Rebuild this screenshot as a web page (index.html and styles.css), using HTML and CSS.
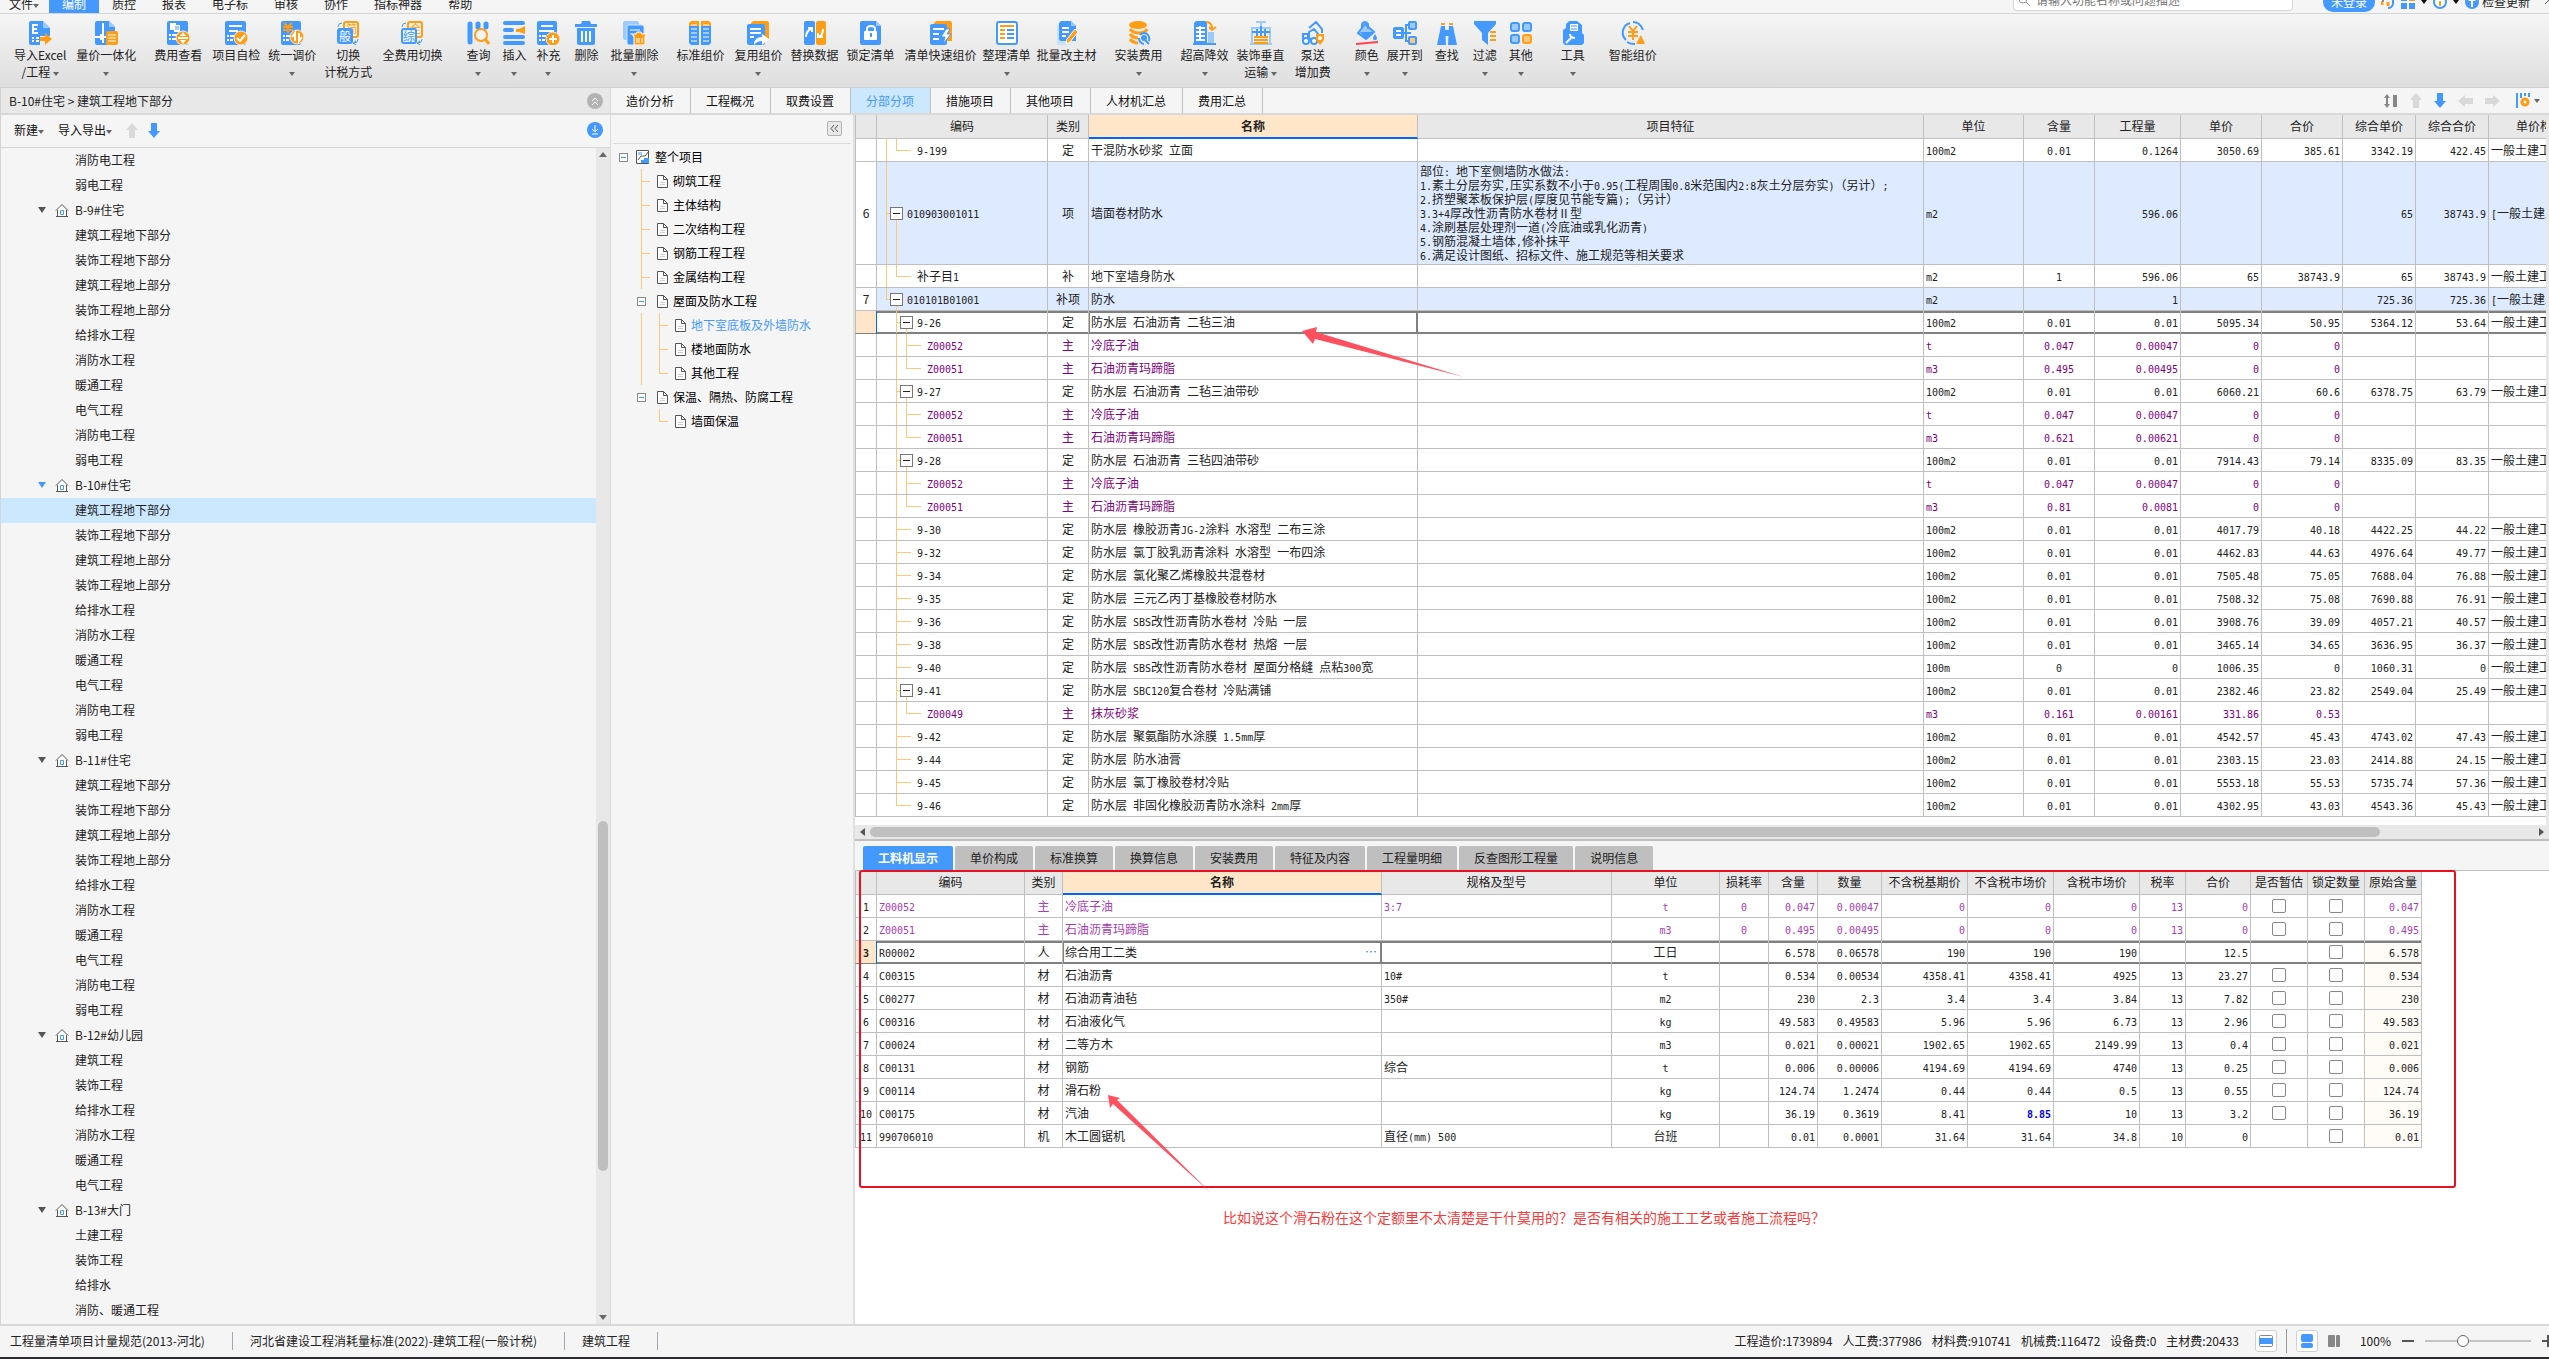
FILE: index.html
```html
<!DOCTYPE html>
<html lang="zh-CN">
<head>
    <meta charset="UTF-8">
    <meta name="viewport" content="width=device-width, initial-scale=1.0">
    <title>B-10#住宅 - 建筑工程地下部分</title>
    <link rel="stylesheet" href="styles.css">
</head>
<body>
    <svg class="sprite" aria-hidden="true">
        <symbol id="i-import" viewBox="0 0 24 24">
            <path fill="#4499ff" d="M3 0h12l7 7v8H12v9H3a2 2 0 0 1-2-2V2a2 2 0 0 1 2-2z"/>
            <path fill="#9ccbfb" d="M15 0l7 7h-7z"/>
            <path fill="none" stroke="#fff" stroke-width="2" d="M10 4H5v8h5M5 8h4M4 17h2M4 20h2M8 17h3M8 20h3"/>
            <path fill="#ff9d15" d="M12 16h5v-4l7 6-7 6v-4h-5z"/>
        </symbol>
        <symbol id="i-price" viewBox="0 0 24 24">
            <path fill="#4499ff" d="M3 0h12l6 6v5h-8v13H3a2 2 0 0 1-2-2V2a2 2 0 0 1 2-2z"/>
            <path fill="#9ccbfb" d="M15 0l6 6h-6z"/>
            <path stroke="#fff" stroke-width="2" d="M9 2v20M1 16h11M7 13v6"/>
            <rect x="12" y="10" width="12" height="14" rx="2" fill="#ff9d15"/>
            <path stroke="#fff" d="M14 14h8M14 17h8M14 20h8"/>
        </symbol>
        <symbol id="i-view" viewBox="0 0 24 24">
            <rect x="1" width="21" height="24" rx="2" fill="#4499ff"/>
            <path fill="#fff" d="M4 2h6v7H4zM8 4h6v7H8z"/>
            <path stroke="#4499ff" d="M9 6h4M9 8h4"/>
            <path stroke="#fff" stroke-width="2" d="M3 14h2M3 18h2M6 14h5M6 18h5"/>
            <circle cx="17" cy="17" r="7" fill="#ff9d15" stroke="#eee"/>
            <path stroke="#fff" stroke-width="2" d="M12 17h10"/>
            <path fill="#fff" d="M17 11l3 4h-6zM17 23l3-4h-6z"/>
        </symbol>
        <symbol id="i-check" viewBox="0 0 24 24">
            <rect x="1" width="21" height="24" rx="2" fill="#4499ff"/>
            <path stroke="#fff" stroke-width="2" d="M5 5h13M5 10h9M3 15h2M6 15h4M3 19h2M6 19h3"/>
            <circle cx="17" cy="17" r="7" fill="#ff9d15" stroke="#eee"/>
            <path fill="none" stroke="#fff" stroke-width="2" d="M13 17l3 3 5-6"/>
        </symbol>
        <symbol id="i-adjust" viewBox="0 0 24 24">
            <rect x="1" width="20" height="24" rx="2" fill="#4499ff"/>
            <path fill="none" stroke="#ff9d15" stroke-width="2" d="M4 2l4 4 4-4M8 6v6M3 6h10M3 9h10"/>
            <path stroke="#fff" stroke-width="2" d="M3 15h2M3 19h2M6 15h4M6 19h3"/>
            <circle cx="17" cy="16" r="7" fill="#ff9d15" stroke="#eee"/>
            <path fill="none" stroke="#fff" stroke-width="2" d="M15 20v-8l-3 4M19 12v8l3-4"/>
        </symbol>
        <symbol id="i-tax" viewBox="0 0 24 24">
            <rect x="8" y="1" width="14" height="15" rx="2" fill="#fff3df" stroke="#ff9d15" stroke-width="2"/>
            <text x="10" y="12" font-size="11" fill="#ff9d15">简</text>
            <rect x="2" y="8" width="14" height="14" rx="2" fill="#4499ff" stroke="#4499ff" stroke-width="2"/>
            <text x="3" y="20" font-size="12" fill="#fff">般</text>
            <path fill="none" stroke="#4499ff" d="M2 6q0-4 4-4M22 18q0 4-4 4M20 24l-3-2 3-2"/>
        </symbol>
        <symbol id="i-full" viewBox="0 0 24 24">
            <rect x="8" y="1" width="14" height="15" rx="2" fill="#fff3df" stroke="#ff9d15" stroke-width="2"/>
            <text x="10" y="12" font-size="11" fill="#ff9d15">全</text>
            <rect x="2" y="8" width="14" height="14" rx="2" fill="#e8f3ff" stroke="#4499ff" stroke-width="2"/>
            <text x="3" y="20" font-size="12" fill="#4499ff">综</text>
            <path fill="none" stroke="#4499ff" d="M2 6q0-4 4-4M22 18q0 4-4 4M20 24l-3-2 3-2"/>
        </symbol>
        <symbol id="i-query" viewBox="0 0 24 24">
            <path stroke="#4499ff" stroke-width="5" stroke-linecap="round" d="M4 3v18M12 3v3M20 3v3"/>
            <circle cx="15" cy="14" r="6" fill="#f4f4f4" stroke="#ff9d15" stroke-width="2"/>
            <path stroke="#ff9d15" stroke-width="3" d="M19 18l4 5"/>
        </symbol>
        <symbol id="i-insert" viewBox="0 0 24 24">
            <path stroke="#4499ff" stroke-width="4" stroke-linecap="round" d="M3 2h18M3 16h18M3 22h18"/>
            <path stroke="#4499ff" stroke-width="4" stroke-linecap="round" d="M3 9h7"/>
            <path fill="#ff9d15" d="M23 5v8l-6-2h-3V8h3z"/>
        </symbol>
        <symbol id="i-add" viewBox="0 0 24 24">
            <path fill="#4499ff" d="M3 0h16a2 2 0 0 1 2 2v22H3a2 2 0 0 1-2-2V2a2 2 0 0 1 2-2z"/>
            <path stroke="#fff" stroke-width="2" d="M5 5h12M3 10h15M3 15h2M6 15h4M3 19h2M6 19h3"/>
            <circle cx="17" cy="18" r="7" fill="#ff9d15" stroke="#eee"/>
            <path stroke="#fff" stroke-width="2" d="M13 18h8M17 14v8"/>
        </symbol>
        <symbol id="i-delete" viewBox="0 0 24 24">
            <path fill="#4499ff" d="M8 0h8l1 3h6v3H1V3h6zM3 7h18v15a2 2 0 0 1-2 2H5a2 2 0 0 1-2-2z"/>
            <path stroke="#fff" stroke-width="2" d="M8 10v11M12 10v11M16 10v11"/>
        </symbol>
        <symbol id="i-batch-delete" viewBox="0 0 24 24">
            <rect x="1" width="16" height="19" rx="2" fill="#9ccbfb"/>
            <rect x="5" y="4" width="17" height="20" rx="2" fill="#4499ff" stroke="#cfe5fb"/>
            <path stroke="#fff" d="M8 9h10M8 13h3"/>
            <path fill="#ff9d15" stroke="#fff" d="M11 13h3l1-2h4l1 2h4v2h-1v9H12v-9h-1z"/>
            <path stroke="#fff" d="M15 17v5M17 17v5M20 17v5"/>
        </symbol>
        <symbol id="i-standard" viewBox="0 0 24 24">
            <path fill="#4499ff" d="M1 5h10v19H3l-2-2zM13 5h10v17l-2 2h-8z"/>
            <path fill="#ff9d15" d="M3 0h8v5H1V2zM13 0h8l2 2v3H13z"/>
            <path stroke="#fff" d="M3 4h6M3 8h6M3 12h6M3 16h6M3 20h6M15 4h6M15 8h6M15 12h6M15 16h6M15 20h6"/>
        </symbol>
        <symbol id="i-reuse" viewBox="0 0 24 24">
            <path fill="#ff9d15" d="M7 0h14a2 2 0 0 1 2 2v16h-4V4H5V2z"/>
            <rect x="1" y="3" width="18" height="21" rx="2" fill="#4499ff"/>
            <path stroke="#fff" stroke-width="2" d="M4 8h11M4 12h11M4 16h4"/>
            <path fill="#fff" d="M8 24q0-8 8-8v-3l7 5-7 6v-4q-5 0-8 4z"/>
        </symbol>
        <symbol id="i-replace" viewBox="0 0 24 24">
            <rect x="1" width="11" height="24" rx="2" fill="#4499ff"/>
            <rect x="13" width="10" height="24" rx="2" fill="#ff9d15"/>
            <path fill="none" stroke="#fff" stroke-width="2" d="M3 16q0-6 5-8M5 7l4 0v4M20 8q0 6-4 8M20 16h-5v-4"/>
        </symbol>
        <symbol id="i-lock" viewBox="0 0 24 24">
            <path fill="#4499ff" d="M3 0h14l5 5v17a2 2 0 0 1-2 2H3a2 2 0 0 1-2-2V2a2 2 0 0 1 2-2z"/>
            <path fill="#9ccbfb" d="M17 0l5 5h-5z"/>
            <path fill="none" stroke="#fff" stroke-width="2" d="M8 10V8q0-3 4-3t4 3v2"/>
            <rect x="5" y="10" width="13" height="9" rx="1" fill="#fff"/>
            <path stroke="#4499ff" stroke-width="2" d="M12 12v4"/>
        </symbol>
        <symbol id="i-quick" viewBox="0 0 24 24">
            <path fill="#ff9d15" d="M7 0h14a2 2 0 0 1 2 2v18h-5V4H5V2z"/>
            <rect x="1" y="3" width="17" height="21" rx="2" fill="#4499ff"/>
            <path stroke="#fff" stroke-width="2" d="M4 8h11M4 13h6M4 18h6"/>
            <path fill="#fff" stroke="#4499ff" d="M17 8l-5 8h4l-2 7 8-10h-4l3-5z"/>
        </symbol>
        <symbol id="i-tidy" viewBox="0 0 24 24">
            <rect x="2" y="1" width="20" height="22" rx="2" fill="#fff" stroke="#4499ff" stroke-width="2"/>
            <path stroke="#ff9d15" stroke-width="2" d="M5 5h14M5 9h5M5 13h5M5 17h5"/>
            <path stroke="#4499ff" stroke-width="2" d="M12 9h7M12 13h7M12 17h7"/>
        </symbol>
        <symbol id="i-material" viewBox="0 0 24 24">
            <path fill="#c6e2fc" d="M2 4h12v20H4a2 2 0 0 1-2-2z"/>
            <path fill="#4499ff" d="M6 0h10l5 5v15H6a2 2 0 0 1-2-2V2z"/>
            <path fill="#9ccbfb" d="M16 0l5 5h-5z"/>
            <path stroke="#fff" stroke-width="2" d="M7 7h7M7 11h7M7 15h4"/>
            <path fill="#ff9d15" stroke="#fff" d="M20 8l3 3-8 10-4 2 1-5z"/>
        </symbol>
        <symbol id="i-install" viewBox="0 0 24 24">
            <ellipse cx="11" cy="4" rx="9" ry="4" fill="#ff9d15"/>
            <path fill="none" stroke="#ff9d15" stroke-width="3" d="M3 8q3 4 9 4t8-4M3 13q3 4 8 4M3 18q3 4 8 4"/>
            <path fill="none" stroke="#4499ff" stroke-width="2" d="M13 14a5 5 0 0 1 8 0q2 3 1 6M12 17q0 5 5 6M17 18l5 5"/>
            <circle cx="17" cy="17" r="3" fill="#4499ff"/>
        </symbol>
        <symbol id="i-height" viewBox="0 0 24 24">
            <path fill="#4499ff" d="M3 0h9a2 2 0 0 1 2 2v20h9v2H0v-2h1V2z"/>
            <path stroke="#fff" stroke-width="2" d="M3 7h9M3 11h9M3 15h9M3 19h9M7 5v15"/>
            <path fill="#9ccbfb" d="M15 11h6v11h-6z"/>
            <path fill="none" stroke="#ff9d15" stroke-width="2" d="M13 1q6 0 6 7M16 6l3 3 4-3"/>
        </symbol>
        <symbol id="i-vertical" viewBox="0 0 24 24">
            <path fill="none" stroke="#9ccbfb" stroke-width="2" d="M2 7h20M3 7v17M21 7v17M1 23h22M7 1h10M12 1v6"/>
            <path fill="none" stroke="#4499ff" stroke-width="2" d="M8 8v8M12 5v11M16 8v8M3 11h18"/>
            <path stroke="#ff9d15" stroke-width="2" d="M5 16h14M5 19h14M5 22h14"/>
        </symbol>
        <symbol id="i-pump" viewBox="0 0 24 24">
            <path fill="none" stroke="#4499ff" stroke-width="2" d="M8 7l7-6 6 7v4M2 19v-6h5v5M8 11l5-3 4 5-2 5H8z"/>
            <circle cx="5" cy="20" r="3" fill="#fff" stroke="#4499ff" stroke-width="2"/>
            <circle cx="13" cy="20" r="3" fill="#fff" stroke="#4499ff" stroke-width="2"/>
            <path fill="#ff9d15" d="M15 13h8v6l-4 5-4-5z"/>
            <circle cx="19" cy="17" r="2" fill="#fff"/>
        </symbol>
        <symbol id="i-color" viewBox="0 0 24 24">
            <path fill="#9ccbfb" stroke="#4499ff" stroke-width="2" d="M10 3l9 8-8 7-8-6z"/>
            <path fill="none" stroke="#4499ff" stroke-width="2" d="M7 7V3q3-4 6 0v5"/>
            <path fill="#4499ff" d="M5 11h14l-8 7zM20 13q4 6 0 6t0-6z"/>
            <path stroke="#ff4455" stroke-width="2" d="M1 23l22-2"/>
        </symbol>
        <symbol id="i-expand" viewBox="0 0 24 24">
            <path fill="none" stroke="#4499ff" stroke-width="2" d="M9 12h9M13 12V4h6M13 12v8h6"/>
            <rect y="6" width="11" height="12" rx="2" fill="#4499ff"/>
            <path stroke="#fff" stroke-width="2" d="M3 10h5M3 14h5"/>
            <rect x="16" y="1" width="7" height="7" rx="1" fill="#9ccbfb" stroke="#4499ff" stroke-width="2"/>
            <rect x="16" y="16" width="7" height="7" rx="1" fill="#ffc878" stroke="#4499ff" stroke-width="2"/>
        </symbol>
        <symbol id="i-find" viewBox="0 0 24 24">
            <path fill="#4499ff" d="M6 5h4l1 19H2zM14 5h4l4 19h-9zM10 9h4v6h-4z"/>
            <path stroke="#ff9d15" stroke-width="2" d="M6 3h4M14 3h4"/>
        </symbol>
        <symbol id="i-filter" viewBox="0 0 24 24">
            <path fill="#4499ff" d="M1 0h22v3l-8 9v12l-6-5v-7L1 3z"/>
            <path stroke="#ff9d15" stroke-width="2" d="M17 11h6M17 15h6M17 19h6"/>
        </symbol>
        <symbol id="i-other" viewBox="0 0 24 24">
            <g fill="#9ccbfb" stroke="#4499ff" stroke-width="2">
                <rect x="2" y="2" width="8" height="8" rx="2"/>
                <rect x="14" y="2" width="8" height="8" rx="2"/>
                <rect x="2" y="14" width="8" height="8" rx="2"/>
            </g>
            <rect x="14" y="14" width="8" height="8" rx="2" fill="#ffc878" stroke="#ff9d15" stroke-width="2"/>
        </symbol>
        <symbol id="i-tool" viewBox="0 0 24 24">
            <path fill="#4499ff" d="M8 0h8l5 4v8l2 2v8l-2 2H4l-2-2V9l3-2V3z"/>
            <path fill="#fff" d="M9 3h8v7H9z"/>
            <path stroke="#9ccbfb" stroke-width="2" d="M10 5h6M10 8h6"/>
            <path fill="none" stroke="#fff" stroke-width="2" d="M5 22l5-5M9 13q0 4 5 4"/>
        </symbol>
        <symbol id="i-smart" viewBox="0 0 24 24">
            <path fill="none" stroke="#4499ff" stroke-width="2" d="M9 2a10 10 0 0 0-4 17M12 1q7 0 10 8M6 21q3 2 8 2"/>
            <path fill="none" stroke="#ff9d15" stroke-width="2" d="M8 5l4 5 4-5M12 10v9M7 11h10M7 15h10"/>
            <path fill="#ff9d15" d="M20 14l4 9h-9z"/>
        </symbol>
        <symbol id="i-home" viewBox="0 0 14 14">
            <path fill="#fff" stroke="#555" d="M1 7.500l6-6 6 6M2.500 7v6.500h9V7M1 13.500h12"/>
            <path fill="none" stroke="#4499ff" d="M5.500 7.500h3v4h-3z"/>
        </symbol>
        <symbol id="i-page" viewBox="0 0 11 13">
            <path fill="#fff" stroke="#555" d="M.5.5h6l4 4v8H.5zM6.500.5v4h4"/>
            <path stroke="#ccc" d="M3 7.500h5M3 9.500h5"/>
        </symbol>
        <symbol id="i-project" viewBox="0 0 14 14">
            <path fill="#fff" stroke="#555" d="M.5.5h12v13H.5z"/>
            <path fill="#9ccbfb" d="M2 2h4v3H2z"/>
            <path fill="none" stroke="#555" d="M13 1L9 6H5L2 10"/>
            <path fill="#4499ff" d="M5 10h3V8h5v5H5z"/>
        </symbol>
        <symbol id="i-up" viewBox="0 0 12 15"><path d="M6 0l6 7H9v8H3V7H0z"/></symbol>
        <symbol id="i-down" viewBox="0 0 12 15"><path d="M6 15l6-7H9V0H3v8H0z"/></symbol>
        <symbol id="i-left" viewBox="0 0 15 12"><path d="M0 6l7-6v3h8v6H7v3z"/></symbol>
        <symbol id="i-right" viewBox="0 0 15 12"><path d="M15 6L8 0v3H0v6h8v3z"/></symbol>
    </svg>

    <header class="menubar">
        <nav class="menus">
            <a class="menu file" href="#">文件<i class="caret"></i></a>
            <a class="menu active" href="#">编制</a>
            <a class="menu" href="#">质控</a>
            <a class="menu" href="#">报表</a>
            <a class="menu" href="#">电子标</a>
            <a class="menu" href="#">审核</a>
            <a class="menu" href="#">协作</a>
            <a class="menu" href="#">指标神器</a>
            <a class="menu" href="#">帮助</a>
        </nav>
        <div class="search">
            <svg width="12" height="12" viewBox="0 0 12 12"><circle cx="5" cy="5" r="4" fill="none" stroke="#999"/><path stroke="#999" d="M8 8l4 4"/></svg>
            <input type="text" placeholder="请输入功能名称或问题描述" aria-label="搜索功能">
        </div>
        <div class="account">
            <button class="login">未登录</button>
            <svg width="14" height="14" viewBox="0 0 14 14"><path fill="none" stroke="#4499ff" stroke-width="2" d="M2 7V5q1-4 5-4t5 4v4q-1 4-5 4"/><path stroke="#ff9d15" stroke-width="3" d="M1 6v4M7 7v4"/></svg>
            <svg width="14" height="14" viewBox="0 0 14 14"><path fill="#4499ff" d="M0 0h6v6H0zM0 8h6v6H0zM8 8h6v6H8z"/><path fill="#ff9d15" d="M8 0h6v6H8z"/></svg>
            <i class="caret dark"></i>
            <svg width="14" height="14" viewBox="0 0 14 14"><circle cx="7" cy="7" r="6" fill="#fff" stroke="#4499ff" stroke-width="2"/><path stroke="#ff9d15" stroke-width="2" d="M7 3v2M7 6v5"/></svg>
            <i class="caret dark"></i>
            <a class="update" href="#"><svg width="15" height="15" viewBox="0 0 15 15"><circle cx="7" cy="7" r="7" fill="#4499ff"/><path fill="#fff" d="M7 2l4 4H8v6H6V6H3z"/></svg>检查更新</a>
            <svg width="12" height="12" viewBox="0 0 12 12"><path fill="none" stroke="#555" d="M1 8l5-5 5 5"/></svg>
        </div>
    </header>

    <div class="ribbon">
        <button class="tool"><svg><use href="#i-import"/></svg><span>导入Excel</span><span>/工程 <i class="caret"></i></span></button>
        <button class="tool gap-10"><svg><use href="#i-price"/></svg><span>量价一体化</span><span><i class="caret"></i></span></button>
        <button class="tool gap-18"><svg><use href="#i-view"/></svg><span>费用查看</span></button>
        <button class="tool gap-10"><svg><use href="#i-check"/></svg><span>项目自检</span></button>
        <button class="tool gap-8"><svg><use href="#i-adjust"/></svg><span>统一调价</span><span><i class="caret"></i></span></button>
        <button class="tool gap-8"><svg><use href="#i-tax"/></svg><span>切换</span><span>计税方式</span></button>
        <button class="tool gap-10"><svg><use href="#i-full"/></svg><span>全费用切换</span></button>
        <button class="tool gap-24"><svg><use href="#i-query"/></svg><span>查询</span><span><i class="caret"></i></span></button>
        <button class="tool gap-12"><svg><use href="#i-insert"/></svg><span>插入</span><span><i class="caret"></i></span></button>
        <button class="tool gap-10"><svg><use href="#i-add"/></svg><span>补充</span><span><i class="caret"></i></span></button>
        <button class="tool gap-14"><svg><use href="#i-delete"/></svg><span>删除</span></button>
        <button class="tool gap-12"><svg><use href="#i-batch-delete"/></svg><span>批量删除</span><span><i class="caret"></i></span></button>
        <button class="tool gap-18"><svg><use href="#i-standard"/></svg><span>标准组价</span></button>
        <button class="tool gap-10"><svg><use href="#i-reuse"/></svg><span>复用组价</span><span><i class="caret"></i></span></button>
        <button class="tool gap-8"><svg><use href="#i-replace"/></svg><span>替换数据</span></button>
        <button class="tool gap-8"><svg><use href="#i-lock"/></svg><span>锁定清单</span></button>
        <button class="tool gap-10"><svg><use href="#i-quick"/></svg><span>清单快速组价</span></button>
        <button class="tool gap-6"><svg><use href="#i-tidy"/></svg><span>整理清单</span><span><i class="caret"></i></span></button>
        <button class="tool gap-6"><svg><use href="#i-material"/></svg><span>批量改主材</span></button>
        <button class="tool gap-18"><svg><use href="#i-install"/></svg><span>安装费用</span><span><i class="caret"></i></span></button>
        <button class="tool gap-18"><svg><use href="#i-height"/></svg><span>超高降效</span><span><i class="caret"></i></span></button>
        <button class="tool gap-8"><svg><use href="#i-vertical"/></svg><span>装饰垂直</span><span>运输 <i class="caret"></i></span></button>
        <button class="tool gap-10"><svg><use href="#i-pump"/></svg><span>泵送</span><span>增加费</span></button>
        <button class="tool gap-24"><svg><use href="#i-color"/></svg><span>颜色</span><span><i class="caret"></i></span></button>
        <button class="tool gap-8"><svg><use href="#i-expand"/></svg><span>展开到</span><span><i class="caret"></i></span></button>
        <button class="tool gap-12"><svg><use href="#i-find"/></svg><span>查找</span></button>
        <button class="tool gap-14"><svg><use href="#i-filter"/></svg><span>过滤</span><span><i class="caret"></i></span></button>
        <button class="tool gap-12"><svg><use href="#i-other"/></svg><span>其他</span><span><i class="caret"></i></span></button>
        <button class="tool gap-28"><svg><use href="#i-tool"/></svg><span>工具</span><span><i class="caret"></i></span></button>
        <button class="tool gap-24"><svg><use href="#i-smart"/></svg><span>智能组价</span></button>
    </div>

    <div class="workspace">
        <aside class="side">
            <div class="side-head">
                <span>B-10#住宅 &gt; 建筑工程地下部分</span>
                <svg width="16" height="16" viewBox="0 0 16 16"><circle cx="8" cy="8" r="8" fill="#b3b3b3"/><path fill="none" stroke="#fff" d="M5 8l3-3 3 3M5 12l3-3 3 3"/></svg>
            </div>
            <div class="side-tools">
                <button class="plain">新建<i class="caret"></i></button>
                <button class="plain">导入导出<i class="caret"></i></button>
                <svg class="arrow off" width="12" height="15"><use href="#i-up"/></svg>
                <svg class="arrow" width="12" height="15"><use href="#i-down"/></svg>
                <svg class="circle" width="16" height="16" viewBox="0 0 16 16"><circle cx="8" cy="8" r="8" fill="#4499ff"/><path fill="none" stroke="#fff" d="M8 3v7M5 7l3 3 3-3M5 12h6"/></svg>
            </div>
            <div class="side-body">
                <ul class="tree" id="project-tree"></ul>
                <div class="vbar">
                    <i class="tri up"></i>
                    <i class="vthumb"></i>
                    <i class="tri down"></i>
                </div>
            </div>
        </aside>

        <div class="content">
            <nav class="tabs">
                <a href="#">造价分析</a>
                <a href="#">工程概况</a>
                <a href="#">取费设置</a>
                <a class="active" href="#">分部分项</a>
                <a href="#">措施项目</a>
                <a href="#">其他项目</a>
                <a href="#">人材机汇总</a>
                <a href="#">费用汇总</a>
                <div class="tab-tools">
                    <svg width="14" height="14" viewBox="0 0 14 14"><path fill="#888" d="M3 0l3 4H0zM3 14l3-4H0zM2 4h2v6H2zM9 1h4v12H9z"/></svg>
                    <svg class="arrow off" width="12" height="15"><use href="#i-up"/></svg>
                    <svg class="arrow" width="12" height="15"><use href="#i-down"/></svg>
                    <svg class="arrow off" width="15" height="12"><use href="#i-left"/></svg>
                    <svg class="arrow off" width="15" height="12"><use href="#i-right"/></svg>
                    <span class="setup"><svg width="14" height="15" viewBox="0 0 14 15"><path stroke="#4499ff" stroke-width="2" d="M1 0v15M5 0v5M9 0v3M13 0v4"/><circle cx="9" cy="9" r="3" fill="none" stroke="#ff9d15" stroke-width="3"/></svg><i class="caret"></i></span>
                </div>
            </nav>
            <div class="panes">
                <aside class="outline">
                    <div class="outline-head"><button class="fold" aria-label="收起"><svg width="13" height="13" viewBox="0 0 13 13"><path fill="none" stroke="#555" d="M6 3L3 6.500 6 10M10 3L7 6.500 10 10"/></svg></button></div>
                    <ul class="outline-tree" id="outline-tree"></ul>
                </aside>

                <main class="main">
                    <div class="grid-wrap">
                        <table class="grid bill">
                            <colgroup>
                                <col class="w22"><col class="w171"><col class="w41"><col class="w329"><col>
                                <col class="w100"><col class="w71"><col class="w86"><col class="w81"><col class="w81">
                                <col class="w73"><col class="w73"><col class="w127">
                            </colgroup>
                            <thead>
                                <tr><th></th><th>编码</th><th>类别</th><th class="sorted">名称</th><th>项目特征</th><th>单位</th><th>含量</th><th>工程量</th><th>单价</th><th>合价</th><th>综合单价</th><th>综合合价</th><th>单价构成文件</th></tr>
                            </thead>
                            <tbody id="bill-rows"></tbody>
                        </table>
                    </div>
                    <div class="hbar">
                        <i class="tri left"></i>
                        <i class="hthumb"></i>
                        <i class="tri right"></i>
                    </div>

                    <nav class="subtabs">
                        <a class="active" href="#">工料机显示</a>
                        <a href="#">单价构成</a>
                        <a href="#">标准换算</a>
                        <a href="#">换算信息</a>
                        <a href="#">安装费用</a>
                        <a href="#">特征及内容</a>
                        <a href="#">工程量明细</a>
                        <a href="#">反查图形工程量</a>
                        <a href="#">说明信息</a>
                    </nav>
                    <section class="detail">
                        <table class="grid parts">
                            <colgroup>
                                <col class="w22"><col class="w148"><col class="w38"><col class="w319"><col class="w230"><col class="w108">
                                <col class="w49"><col class="w49"><col class="w64"><col class="w86"><col class="w86"><col class="w86">
                                <col class="w46"><col class="w65"><col class="w57"><col class="w57"><col class="w57">
                            </colgroup>
                            <thead>
                                <tr><th></th><th>编码</th><th>类别</th><th class="sorted">名称</th><th>规格及型号</th><th>单位</th><th>损耗率</th><th>含量</th><th>数量</th><th>不含税基期价</th><th>不含税市场价</th><th>含税市场价</th><th>税率</th><th>合价</th><th>是否暂估</th><th>锁定数量</th><th>原始含量</th></tr>
                            </thead>
                            <tbody id="part-rows"></tbody>
                        </table>
                        <div class="mark-box"></div>
                        <svg class="mark-arrow second" width="105" height="99" viewBox="0 0 105 99"><path fill="#ff5060" d="M0 0l12 3-3 2 94 93L5 9l-3 4z"/></svg>
                        <p class="note">比如说这个滑石粉在这个定额里不太清楚是干什莫用的？是否有相关的施工工艺或者施工流程吗？</p>
                    </section>
                    <svg class="mark-arrow first" width="162" height="50" viewBox="0 0 162 50"><path fill="#ff5060" d="M0 4l15-4-1 5 148 45L13 12l-2 5z"/></svg>
                </main>
            </div>
        </div>
    </div>

    <footer class="status">
        <span class="seg">工程量清单项目计量规范(2013-河北)</span>
        <span class="seg">河北省建设工程消耗量标准(2022)-建筑工程(一般计税)</span>
        <span class="seg">建筑工程</span>
        <div class="totals">
            <span>工程造价:1739894</span>
            <span>人工费:377986</span>
            <span>材料费:910741</span>
            <span>机械费:116472</span>
            <span>设备费:0</span>
            <span>主材费:20433</span>
        </div>
        <div class="view">
            <button class="mode" aria-label="列表"><svg width="14" height="14" viewBox="0 0 14 14"><rect x=".5" y="1.500" width="13" height="11" rx="1" fill="#fff" stroke="#888"/><path fill="#4499ff" d="M0 4h14v6H0z"/></svg></button>
            <i class="bar"></i>
            <button class="mode" aria-label="上下"><svg width="14" height="14" viewBox="0 0 14 14"><rect x="1" y="0" width="12" height="8" rx="2" fill="#4499ff"/><rect x="1" y="9" width="12" height="5" rx="2" fill="#4499ff"/></svg></button>
            <button class="mode flat" aria-label="左右"><svg width="14" height="14" viewBox="0 0 14 14"><rect x="1" y="1" width="7" height="12" rx="1" fill="#888"/><rect x="9" y="1" width="4" height="12" rx="1" fill="#888"/></svg></button>
        </div>
        <div class="zoom">
            <span>100%</span>
            <button class="step" aria-label="缩小"><svg width="12" height="12" viewBox="0 0 12 12"><path stroke="#555" stroke-width="2" d="M0 6h12"/></svg></button>
            <input type="range" min="0" max="100" value="34" aria-label="缩放">
            <button class="step" aria-label="放大"><svg width="12" height="12" viewBox="0 0 12 12"><path stroke="#555" stroke-width="2" d="M0 6h12M6 0v12"/></svg></button>
        </div>
    </footer>

    <script src="script.js"></script>
</body>
</html>
```
FILE: styles.css
```css
* {
    box-sizing: border-box;
}
body {
    margin: 0;
    height: 100vh;
    display: flex;
    flex-direction: column;
    overflow: hidden;
    background-color: #f5f5f5;
    color: #222;
    font-family: "Noto Sans CJK SC", sans-serif;
    font-size: 12px;
    line-height: 18px;
}
a {
    color: inherit;
    text-decoration: none;
}
button {
    padding: 0;
    border: none;
    background: none;
    color: inherit;
    font: inherit;
    cursor: pointer;
}
ul {
    margin: 0;
    padding: 0;
    list-style: none;
}
svg {
    display: block;
    flex: none;
}
.sprite {
    display: none;
}
.caret {
    display: inline-block;
    border: 3px solid transparent;
    border-top: 4px solid #666;
    border-bottom: none;
    vertical-align: middle;
}
.caret.dark {
    border-top-color: #111;
}

/* menu */
.menubar {
    flex: none;
    display: flex;
    align-items: flex-end;
    height: 14px;
    border-bottom: 1px solid #d4d4d4;
    overflow: hidden;
}
.menus {
    display: flex;
    flex: 1;
}
.menu {
    padding: 0 13px;
}
.menu.file {
    padding: 0 10px 0 9px;
}
.menu.active {
    background-color: #4499ff;
    color: #fff;
}
.search {
    display: flex;
    align-items: center;
    gap: 6px;
    width: 280px;
    height: 22px;
    margin-bottom: 2px;
    padding: 0 0 0 4px;
    border: 1px solid #d4d4d4;
    border-radius: 3px;
    background-color: #fff;
}
.search input {
    flex: 1;
    min-width: 0;
    padding: 0;
    border: none;
    outline: none;
    background: none;
    font: inherit;
}
.search input::placeholder {
    color: #777;
}
.account {
    display: flex;
    align-items: center;
    gap: 6px;
    height: 20px;
    margin: 0 -7px 1px 30px;
}
.login {
    width: 52px;
    height: 20px;
    border-radius: 10px;
    background-color: #4499ff;
    color: #fff;
}
.update {
    display: flex;
    align-items: center;
    gap: 2px;
    margin-right: 8px;
}

/* ribbon */
.ribbon {
    flex: none;
    display: flex;
    align-items: flex-start;
    height: 74px;
    padding: 7px 14px 0;
    border-bottom: 1px solid #d0d0d0;
    background: linear-gradient(#f5f5f5, #dedede);
}
.tool {
    display: flex;
    flex-direction: column;
    align-items: center;
    line-height: 17px;
    white-space: nowrap;
}
.tool svg {
    width: 24px;
    height: 24px;
    margin-bottom: 1px;
}
.gap-6 { margin-left: 6px; }
.gap-8 { margin-left: 8px; }
.gap-10 { margin-left: 10px; }
.gap-12 { margin-left: 12px; }
.gap-14 { margin-left: 14px; }
.gap-18 { margin-left: 18px; }
.gap-24 { margin-left: 24px; }
.gap-28 { margin-left: 28px; }

.workspace {
    flex: 1;
    min-height: 0;
    display: flex;
}

/* project tree */
.side {
    flex: none;
    width: 611px;
    display: flex;
    flex-direction: column;
    border-left: 1px solid #d4d4d4;
    border-right: 1px solid #d9d9d9;
}
.side-head {
    display: flex;
    align-items: center;
    justify-content: space-between;
    height: 27px;
    padding: 0 7px 0 8px;
    border-bottom: 2px solid #d9d9d9;
    background-color: #e8e8e8;
}
.side-tools {
    display: flex;
    align-items: center;
    gap: 10px;
    height: 33px;
    padding: 0 7px 2px 13px;
    border-bottom: 1px solid #d4d4d4;
}
.plain {
    margin-right: 4px;
    color: #111;
}
.arrow {
    fill: #4499ff;
}
.arrow.off {
    fill: #d9d9d9;
}
.circle {
    margin-left: auto;
}
.side-body {
    flex: 1;
    min-height: 0;
    display: flex;
}
.tree {
    flex: 1;
    overflow: hidden;
}
.tree li {
    display: flex;
    align-items: center;
    height: 25px;
    padding: 0 0 2px 74px;
}
.tree .building {
    gap: 9px;
    padding-left: 37px;
}
.tree .building svg {
    width: 14px;
    height: 14px;
    margin-right: -3px;
}
.tree .building .caret {
    border-width: 4px 4px 0;
    border-top: 6px solid #555;
}
.tree .open .caret {
    border-top-color: #4499ff;
}
.tree .selected {
    background-color: #cce8ff;
}
.vbar {
    display: flex;
    flex-direction: column;
    align-items: center;
    width: 14px;
    padding: 4px 0;
    background-color: #e8e8e8;
}
.vthumb {
    width: 10px;
    height: 30%;
    margin-top: auto;
    margin-bottom: 144px;
    border-radius: 5px;
    background-color: #bfbfbf;
}
.tri {
    flex: none;
    border: 4px solid transparent;
}
.tri.up {
    border-bottom: 5px solid #666;
    border-top: none;
}
.tri.down {
    border-top: 5px solid #666;
    border-bottom: none;
}
.tri.left {
    border-right: 5px solid #555;
    border-left: none;
}
.tri.right {
    border-left: 5px solid #555;
    border-right: none;
}

/* tabs */
.content {
    flex: 1;
    min-width: 0;
    display: flex;
    flex-direction: column;
}
.tabs {
    flex: none;
    display: flex;
    height: 27px;
    border-bottom: 2px solid #d9d9d9;
}
.tabs a {
    padding: 0 16px 0 15px;
    border-right: 1px solid #bfbfbf;
    color: #111;
    line-height: 26px;
}
.tabs a.active {
    background-color: #cce8ff;
    color: #4499ff;
}
.tab-tools {
    display: flex;
    align-items: center;
    gap: 12px;
    margin-left: auto;
    padding-right: 9px;
}
.setup {
    display: flex;
    align-items: center;
    gap: 4px;
    margin-left: 4px;
}

.panes {
    flex: 1;
    min-height: 0;
    display: flex;
}
.outline {
    flex: none;
    width: 244px;
    border-right: 2px solid #e0e0e0;
}
.outline-head {
    display: flex;
    justify-content: flex-end;
    align-items: center;
    height: 29px;
    margin: 0 2px;
    padding: 0 9px 2px 0;
    border-bottom: 1px solid #dcdcdc;
}
.fold {
    border: 1px solid #b3b3b3;
    border-radius: 2px;
    background-color: #e8e8e8;
}
.outline-tree {
    padding: 1px 0 0 3px;
    color: #000;
}
.outline-tree li {
    display: flex;
    align-items: center;
    height: 24px;
}
.outline-tree svg {
    width: 11px;
    height: 13px;
    margin: 0 5px 0 7px;
}
.outline-tree .root svg {
    width: 14px;
    height: 14px;
    margin: 0 5px 0 4px;
}
.outline-tree .selected {
    color: #4499ff;
}
.outline-tree .g {
    width: 18px;
    height: 24px;
}
.outline-tree .box {
    width: 9px;
    height: 9px;
    border-color: #888;
}
.outline-tree .box::after {
    left: 1px;
    right: 1px;
    top: 3px;
    background-color: #2ba6d8;
}
.outline-tree .g.x::before {
    display: none;
}

/* guide lines shared by both trees */
.g {
    position: relative;
    flex: none;
    width: 10px;
    height: 100%;
    display: flex;
    align-items: center;
    justify-content: center;
}
.g::before,
.g::after {
    position: absolute;
    background-color: #ffc878;
}
.g.v::before,
.g.t::before,
.g.l::before,
.g.x::before {
    content: "";
    left: 50%;
    top: 0;
    bottom: 0;
    width: 1px;
}
.g.l::before {
    bottom: 50%;
}
.g.x::before {
    top: 50%;
}
.g.t::after,
.g.l::after,
.g.h::after {
    content: "";
    left: 50%;
    right: 0;
    top: 50%;
    height: 1px;
}
.g.h::after {
    left: 0;
}
.box {
    position: relative;
    flex: none;
    width: 13px;
    height: 13px;
    border: 1px solid #777;
    background-color: #fff;
}
.box::after {
    content: "";
    position: absolute;
    left: 2px;
    right: 2px;
    top: 5px;
    height: 1px;
    background-color: #222;
}

/* data grids */
.main {
    position: relative;
    flex: 1;
    min-width: 0;
    display: flex;
    flex-direction: column;
    background-color: #fff;
}
.grid-wrap {
    overflow: hidden;
    padding-bottom: 8px;
    border-right: 3px solid #e8e8e8;
}
.grid {
    table-layout: fixed;
    border-collapse: separate;
    border-spacing: 0;
}
/* the last column runs past the visible edge */
.bill {
    width: calc(100% + 70px);
}
.parts {
    width: 1567px;
}
.grid th,
.grid td {
    height: 23px;
    padding: 0 2px 1px;
    border-right: 1px solid #bfbfbf;
    border-bottom: 1px solid #bfbfbf;
    overflow: hidden;
    line-height: 18px;
    white-space: nowrap;
    text-align: right;
}
.grid th {
    height: 24px;
    background-color: #e8e8e8;
    font-weight: normal;
    text-align: center;
}
.grid th.sorted {
    background-color: #ffe6c8;
    border-bottom: 2px solid #0066ff;
    font-weight: bold;
}
.grid th:first-child,
.grid td:first-child {
    padding: 0;
    border-left: 1px solid #bfbfbf;
    text-align: center;
}
.grid .en {
    font-family: "DejaVu Sans Mono", monospace;
    font-size: 10px;
    line-height: 0;
}
.grid td.txt {
    text-align: left;
}
.grid td.mid {
    text-align: center;
}
.grid td.feature {
    text-align: left;
    line-height: 14px;
    white-space: pre;
}
.grid td.code-cell {
    padding: 0 0 0 4px;
}
.code {
    display: flex;
    align-items: center;
    height: 22px;
}
.code .label {
    margin-left: 6px;
}
.item td {
    background-color: #ddeaff;
}
.item td:first-child {
    background-color: #fff;
}
.tall .code {
    height: 102px;
}
.main-part {
    color: #800080;
}
.parts .main-part {
    color: #a83cb4;
}
.grid .main-part td:first-child {
    color: #222;
}
.grid .current td {
    border-bottom-color: #808080;
    box-shadow: inset 0 2px #808080, inset 0 -1px #808080;
}
.grid .current td:first-child {
    background-color: #ffe6c8;
    border-right-color: #0066ff;
    box-shadow: none;
    font-weight: bold;
}
.grid .current td:nth-child(4) {
    border-right-color: #808080;
    box-shadow: inset 0 2px #808080, inset 0 -1px #808080, inset 1px 0 #808080, inset -1px 0 #808080;
}
.named {
    display: flex;
    justify-content: space-between;
    padding-right: 2px;
}
.more {
    color: #2b7fc8;
}
.parts td.tint {
    background-color: #fffbf6;
}
.changed {
    color: #0000e0;
    font-weight: bold;
}
.grid input[type="checkbox"] {
    appearance: none;
    display: block;
    width: 14px;
    height: 14px;
    margin: 0 auto;
    border: 1px solid #888;
    border-radius: 2px;
    background-color: #fff;
}
.w22 { width: 22px; }
.w38 { width: 38px; }
.w41 { width: 41px; }
.w46 { width: 46px; }
.w49 { width: 49px; }
.w57 { width: 57px; }
.w64 { width: 64px; }
.w65 { width: 65px; }
.w71 { width: 71px; }
.w73 { width: 73px; }
.w81 { width: 81px; }
.w86 { width: 86px; }
.w100 { width: 100px; }
.w108 { width: 108px; }
.w127 { width: 127px; }
.w148 { width: 148px; }
.w171 { width: 171px; }
.w230 { width: 230px; }
.w319 { width: 319px; }
.w329 { width: 329px; }

.hbar {
    display: flex;
    align-items: center;
    height: 14px;
    padding: 0 5px;
    background-color: #e8e8e8;
}
.hthumb {
    flex: 1;
    height: 10px;
    margin: 0 159px 0 5px;
    border-radius: 5px;
    background-color: #bfbfbf;
}
.subtabs {
    display: flex;
    align-items: flex-end;
    gap: 2px;
    height: 32px;
    padding-left: 8px;
    border-top: 2px solid #bfbfbf;
    border-bottom: 1px solid #bfbfbf;
    background-color: #f5f5f5;
}
.subtabs a {
    padding: 0 15px;
    border-radius: 2px 2px 0 0;
    background-color: #bfbfbf;
    line-height: 24px;
}
.subtabs a.active {
    background-color: #4499ff;
    color: #fff;
    font-weight: bold;
}
.detail {
    position: relative;
}

/* review marks drawn over the grids */
.mark-box {
    position: absolute;
    left: 4px;
    top: -1px;
    width: 1597px;
    height: 318px;
    border: 2px solid #e81123;
    border-radius: 3px;
}
.mark-arrow {
    position: absolute;
}
.mark-arrow.first {
    left: 447px;
    top: 212px;
}
.mark-arrow.second {
    left: 253px;
    top: 224px;
}
.note {
    margin: 59px 0 0 368px;
    color: #f93a3a;
    font-size: 14px;
    line-height: 20px;
}

/* status */
.status {
    flex: none;
    display: flex;
    align-items: center;
    height: 35px;
    padding: 0 0 1px 10px;
    border-top: 2px solid #d9d9d9;
    border-bottom: 2px solid #2b2830;
    white-space: nowrap;
    overflow: hidden;
}
.seg {
    margin-right: 17px;
    padding-right: 27px;
    border-right: 1px solid #a0a8b0;
}
.totals {
    display: flex;
    gap: 10px;
    margin-left: auto;
}
.view {
    display: flex;
    align-items: center;
    gap: 9px;
    margin-left: 16px;
}
.mode {
    display: flex;
    align-items: center;
    justify-content: center;
    width: 22px;
    height: 22px;
    border: 1px solid #d0d0d0;
    border-radius: 3px;
    background-color: #fff;
}
.mode.flat {
    width: 14px;
    border: none;
    background: none;
}
.bar {
    width: 1px;
    height: 24px;
    background-color: #999;
}
.zoom {
    display: flex;
    align-items: center;
    gap: 11px;
    margin: 0 -5px 0 19px;
}
.step {
    flex: none;
}
.zoom input {
    appearance: none;
    width: 106px;
    height: 14px;
    margin: 0;
    background: linear-gradient(#c4c4c4, #c4c4c4) center / 100% 2px no-repeat;
}
.zoom input::-webkit-slider-thumb {
    appearance: none;
    width: 12px;
    height: 12px;
    border: 1px solid #666;
    border-radius: 50%;
    background-color: #fff;
}
```
FILE: script.js
```js
// 项目树
const house = ['建筑工程地下部分', '装饰工程地下部分', '建筑工程地上部分', '装饰工程地上部分', '给排水工程',
    '消防水工程', '暖通工程', '电气工程', '消防电工程', '弱电工程'];
const projects = [
    { name: '', units: ['消防电工程', '弱电工程'] },
    { name: 'B-9#住宅', units: house },
    { name: 'B-10#住宅', units: house, selected: 0 },
    { name: 'B-11#住宅', units: house },
    { name: 'B-12#幼儿园', units: ['建筑工程', '装饰工程', '给排水工程', '消防水工程', '暖通工程', '电气工程'] },
    { name: 'B-13#大门', units: ['土建工程', '装饰工程', '给排水', '消防、暖通工程'] }
];

// 分部树: [引导线, 名称, 样式]
const outline = [
    ['x', '整个项目', 'root'],
    ['t', '砌筑工程'],
    ['t', '主体结构'],
    ['t', '二次结构工程'],
    ['t', '钢筋工程工程'],
    ['t', '金属结构工程'],
    [' x', '屋面及防水工程'],
    ['vt', '地下室底板及外墙防水', 'selected'],
    ['vt', '楼地面防水'],
    ['vl', '其他工程'],
    [' x', '保温、隔热、防腐工程'],
    [' l', '墙面保温']
];

const feature = `部位: 地下室侧墙防水做法:
1.素土分层夯实,压实系数不小于0.95(工程周围0.8米范围内2:8灰土分层夯实)（另计）;
2.挤塑聚苯板保护层(厚度见节能专篇);（另计）
3.3+4厚改性沥青防水卷材Ⅱ型
4.涂刷基层处理剂一道(冷底油或乳化沥青)
5.钢筋混凝土墙体,修补抹平
6.满足设计图纸、招标文件、施工规范等相关要求`;

const file = '一般土建工程';

// 引导线: v 竖线 t 分支 l 末支 h 横线 x 展开框
const bill = [
    ['', '', 'vlh', '9-199', '定', '干混防水砂浆 立面', '', '100m2', '0.01', '0.1264', '3050.69', '385.61', '3342.19', '422.45', file],
    ['item tall', '6', 'tx', '010903001011', '项', '墙面卷材防水', feature, 'm2', '', '596.06', '', '', '65', '38743.9', `[${file}]`],
    ['', '', 'vlh', '补子目1', '补', '地下室墙身防水', '', 'm2', '1', '596.06', '65', '38743.9', '65', '38743.9', file],
    ['item', '7', 'lx', '010101B01001', '补项', '防水', '', 'm2', '', '1', '', '', '725.36', '725.36', `[${file}]`],
    ['current', '', ' tx', '9-26', '定', '防水层 石油沥青 二毡三油', '', '100m2', '0.01', '0.01', '5095.34', '50.95', '5364.12', '53.64', file],
    ['main-part', '', ' vth', 'Z00052', '主', '冷底子油', '', 't', '0.047', '0.00047', '0', '0', '', '', ''],
    ['main-part', '', ' vlh', 'Z00051', '主', '石油沥青玛蹄脂', '', 'm3', '0.495', '0.00495', '0', '0', '', '', ''],
    ['', '', ' tx', '9-27', '定', '防水层 石油沥青 二毡三油带砂', '', '100m2', '0.01', '0.01', '6060.21', '60.6', '6378.75', '63.79', file],
    ['main-part', '', ' vth', 'Z00052', '主', '冷底子油', '', 't', '0.047', '0.00047', '0', '0', '', '', ''],
    ['main-part', '', ' vlh', 'Z00051', '主', '石油沥青玛蹄脂', '', 'm3', '0.621', '0.00621', '0', '0', '', '', ''],
    ['', '', ' tx', '9-28', '定', '防水层 石油沥青 三毡四油带砂', '', '100m2', '0.01', '0.01', '7914.43', '79.14', '8335.09', '83.35', file],
    ['main-part', '', ' vth', 'Z00052', '主', '冷底子油', '', 't', '0.047', '0.00047', '0', '0', '', '', ''],
    ['main-part', '', ' vlh', 'Z00051', '主', '石油沥青玛蹄脂', '', 'm3', '0.81', '0.0081', '0', '0', '', '', ''],
    ['', '', ' th', '9-30', '定', '防水层 橡胶沥青JG-2涂料 水溶型 二布三涂', '', '100m2', '0.01', '0.01', '4017.79', '40.18', '4422.25', '44.22', file],
    ['', '', ' th', '9-32', '定', '防水层 氯丁胶乳沥青涂料 水溶型 一布四涂', '', '100m2', '0.01', '0.01', '4462.83', '44.63', '4976.64', '49.77', file],
    ['', '', ' th', '9-34', '定', '防水层 氯化聚乙烯橡胶共混卷材', '', '100m2', '0.01', '0.01', '7505.48', '75.05', '7688.04', '76.88', file],
    ['', '', ' th', '9-35', '定', '防水层 三元乙丙丁基橡胶卷材防水', '', '100m2', '0.01', '0.01', '7508.32', '75.08', '7690.88', '76.91', file],
    ['', '', ' th', '9-36', '定', '防水层 SBS改性沥青防水卷材 冷贴 一层', '', '100m2', '0.01', '0.01', '3908.76', '39.09', '4057.21', '40.57', file],
    ['', '', ' th', '9-38', '定', '防水层 SBS改性沥青防水卷材 热熔 一层', '', '100m2', '0.01', '0.01', '3465.14', '34.65', '3636.95', '36.37', file],
    ['', '', ' th', '9-40', '定', '防水层 SBS改性沥青防水卷材 屋面分格缝 点粘300宽', '', '100m', '0', '0', '1006.35', '0', '1060.31', '0', file],
    ['', '', ' tx', '9-41', '定', '防水层 SBC120复合卷材 冷贴满铺', '', '100m2', '0.01', '0.01', '2382.46', '23.82', '2549.04', '25.49', file],
    ['main-part', '', ' vlh', 'Z00049', '主', '抹灰砂浆', '', 'm3', '0.161', '0.00161', '331.86', '0.53', '', '', ''],
    ['', '', ' th', '9-42', '定', '防水层 聚氨酯防水涂膜 1.5mm厚', '', '100m2', '0.01', '0.01', '4542.57', '45.43', '4743.02', '47.43', file],
    ['', '', ' th', '9-44', '定', '防水层 防水油膏', '', '100m2', '0.01', '0.01', '2303.15', '23.03', '2414.88', '24.15', file],
    ['', '', ' th', '9-45', '定', '防水层 氯丁橡胶卷材冷贴', '', '100m2', '0.01', '0.01', '5553.18', '55.53', '5735.74', '57.36', file],
    ['', '', ' lh', '9-46', '定', '防水层 非固化橡胶沥青防水涂料 2mm厚', '', '100m2', '0.01', '0.01', '4302.95', '43.03', '4543.36', '45.43', file]
];

const parts = [
    ['Z00052', '主', '冷底子油', '3:7', 't', '0', '0.047', '0.00047', '0', '0', '0', '13', '0', true, '0.047'],
    ['Z00051', '主', '石油沥青玛蹄脂', '', 'm3', '0', '0.495', '0.00495', '0', '0', '0', '13', '0', true, '0.495'],
    ['R00002', '人', '综合用工二类', '', '工日', '', '6.578', '0.06578', '190', '190', '190', '', '12.5', false, '6.578'],
    ['C00315', '材', '石油沥青', '10#', 't', '', '0.534', '0.00534', '4358.41', '4358.41', '4925', '13', '23.27', true, '0.534'],
    ['C00277', '材', '石油沥青油毡', '350#', 'm2', '', '230', '2.3', '3.4', '3.4', '3.84', '13', '7.82', true, '230'],
    ['C00316', '材', '石油液化气', '', 'kg', '', '49.583', '0.49583', '5.96', '5.96', '6.73', '13', '2.96', true, '49.583'],
    ['C00024', '材', '二等方木', '', 'm3', '', '0.021', '0.00021', '1902.65', '1902.65', '2149.99', '13', '0.4', true, '0.021'],
    ['C00131', '材', '钢筋', '综合', 't', '', '0.006', '0.00006', '4194.69', '4194.69', '4740', '13', '0.25', true, '0.006'],
    ['C00114', '材', '滑石粉', '', 'kg', '', '124.74', '1.2474', '0.44', '0.44', '0.5', '13', '0.55', true, '124.74'],
    ['C00175', '材', '汽油', '', 'kg', '', '36.19', '0.3619', '8.41', '8.85', '10', '13', '3.2', true, '36.19'],
    ['990706010', '机', '木工圆锯机', '直径(mm) 500', '台班', '', '0.01', '0.0001', '31.64', '31.64', '34.8', '10', '0', false, '0.01']
];

// 西文和数字用等宽字体
function mono(text) {
    return text.replace(/[ -~]+/g, '<span class="en">$&</span>');
}

function guides(pattern) {
    return [...pattern].map(c => c === 'x'
        ? '<span class="g x"><i class="box"></i></span>'
        : `<span class="g ${c.trim()}"></span>`).join('');
}

function renderProjects() {
    let html = '';
    projects.forEach(p => {
        const open = p.selected !== undefined;
        if (p.name) {
            html += `<li class="building${open ? ' open' : ''}"><i class="caret"></i><svg><use href="#i-home"/></svg>${p.name}</li>`;
        }
        p.units.forEach((u, i) => {
            html += `<li${p.selected === i ? ' class="selected"' : ''}>${u}</li>`;
        });
    });
    document.getElementById('project-tree').innerHTML = html;
}

function renderOutline() {
    document.getElementById('outline-tree').innerHTML = outline.map(([line, name, cls]) => {
        const icon = cls === 'root' ? 'project' : 'page';
        const pattern = cls === 'root' || line.length > 1 && line[1] === 'x' ? line : ' ' + line;
        return `<li class="${cls || ''}">${guides(pattern)}<svg><use href="#i-${icon}"/></svg>${name}</li>`;
    }).join('');
}

function renderBill() {
    document.getElementById('bill-rows').innerHTML = bill.map(r => {
        const [cls, no, line, code, kind, name, desc, unit, content, ...nums] = r;
        const last = nums.pop();
        return `<tr class="${cls}"><td>${no}</td>
            <td class="code-cell"><div class="code">${guides(line)}<span class="label">${mono(code)}</span></div></td>
            <td class="mid">${kind}</td><td class="txt">${mono(name)}</td><td class="feature">${mono(desc)}</td>
            <td class="txt">${mono(unit)}</td><td class="mid">${mono(content)}</td>
            ${nums.map(n => `<td>${mono(n)}</td>`).join('')}<td class="txt">${mono(last)}</td></tr>`;
    }).join('');
}

function renderParts() {
    document.getElementById('part-rows').innerHTML = parts.map((r, i) => {
        const [code, kind, name, spec, unit, loss, ...rest] = r;
        const original = rest.pop();
        const estimate = rest.pop();
        const cls = kind === '主' ? 'main-part' : i === 2 ? 'current' : '';
        const more = i === 2 ? '<span class="more">…</span>' : '';
        return `<tr class="${cls}"><td>${mono(String(i + 1))}</td><td class="txt">${mono(code)}</td><td class="mid">${kind}</td>
            <td class="txt"><div class="named">${name}${more}</div></td><td class="txt">${mono(spec)}</td>
            <td class="mid">${mono(unit)}</td><td class="mid">${mono(loss)}</td>
            ${rest.map(n => `<td${n === '8.85' ? ' class="changed"' : ''}>${mono(n)}</td>`).join('')}
            <td>${estimate ? `<input type="checkbox" aria-label="是否暂估 ${code}">` : ''}</td>
            <td><input type="checkbox" aria-label="锁定数量 ${code}"></td>
            <td${i > 1 ? ' class="tint"' : ''}>${mono(original)}</td></tr>`;
    }).join('');
}

renderProjects();
renderOutline();
renderBill();
renderParts();
```
